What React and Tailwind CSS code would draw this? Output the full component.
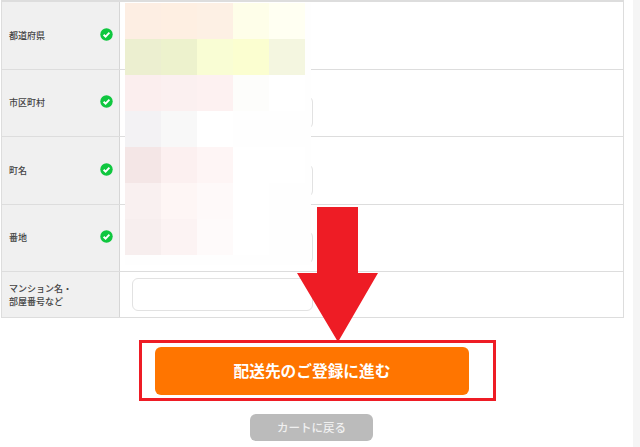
import React from 'react';

const jp = { fontFamily: '"Noto Sans CJK JP", "Liberation Sans", sans-serif' };

const rows = [
  { label: '都道府県', input: false },
  { label: '市区町村', input: true },
  { label: '町名', input: true },
  { label: '番地', input: true },
];

// mosaic blur covering the entered address
const patches = [
  ['bg-[#fdeee3]', 'bg-[#feefe2]', 'bg-[#fdf0e4]', 'bg-[#fefee9]', 'bg-[#fffff2]'],
  ['bg-[#ecefd0]', 'bg-[#edf2cd]', 'bg-[#f9fdd4]', 'bg-[#fbfed0]', 'bg-[#f4f6e0]'],
  ['bg-[#fbeeee]', 'bg-[#fbf0f0]', 'bg-[#fdf1f1]', 'bg-[#fdfdfb]', 'bg-[#ffffff]'],
  ['bg-[#f3f2f4]', 'bg-[#f8f8f8]', 'bg-[#ffffff]', 'bg-[#fefefe]', 'bg-[#fefefe]'],
  ['bg-[#f4e6e6]', 'bg-[#fcf0f0]', 'bg-[#fef5f5]', 'bg-[#ffffff]', 'bg-[#ffffff]'],
  ['bg-[#f9f0f0]', 'bg-[#fef6f5]', 'bg-[#fef9f9]', 'bg-[#ffffff]', 'bg-[#fefefe]'],
  ['bg-[#f7eeee]', 'bg-[#fcf3f3]', 'bg-[#fefafa]', 'bg-[#ffffff]', 'bg-[#fefefe]'],
];

const Check = () => (
  <svg width="13" height="13" viewBox="0 0 13 13" className="shrink-0 -mt-0.5">
    <circle cx="6.5" cy="6.5" r="6.2" fill="#0fc73f" />
    <path d="M3.6 6.7 L5.6 8.6 L9.4 4.7" fill="none" stroke="#fff" strokeWidth="1.9" />
  </svg>
);

const Row = ({ label, input }) => (
  <div className="flex h-[67.5px] border-b border-[#dddddd]">
    <div className="w-[118px] bg-[#f0f0f0] border-r border-[#d6d6d6] pl-[7px] pr-[6px] flex items-center justify-between text-[9px] font-medium text-[#444444]">
      <span>{label}</span>
      <Check />
    </div>
    <div className="flex-1 pl-3 pb-[7px] flex items-end">
      {input && <div className="w-[181px] h-[33px] border border-[#e2e2e2] rounded-md bg-white" />}
    </div>
  </div>
);

export default function App() {
  return (
    <div className="relative w-[640px] h-[447px] overflow-hidden bg-white flex" style={jp}>
      <div className="w-[633px] pl-px pr-[9px]">
        <div className="border-t-2 border-r border-l border-[#dddddd]">
          {rows.map((r) => (
            <Row key={r.label} {...r} />
          ))}
          <div className="flex h-[46px] border-b border-[#dddddd]">
            <div className="w-[118px] bg-[#f0f0f0] border-r border-[#d6d6d6] pl-[7px] flex items-center text-[9px] leading-[13px] font-medium text-[#444444]">
              <span>
                マンション名・
                <br />
                部屋番号など
              </span>
            </div>
            <div className="flex-1 pl-3 flex items-center">
              <div className="w-[181px] h-[33px] border border-[#e2e2e2] rounded-md bg-white" />
            </div>
          </div>
        </div>

        <div className="mt-[22px] ml-[138px] w-[357px] h-[61px] border-[3px] border-[#ee1c25] flex items-start pt-[4px] pl-[13px]">
          <button className="w-[314px] h-[48px] rounded-md bg-[#ff7500] text-white font-bold text-[15.7px]">
            配送先のご登録に進む
          </button>
        </div>

        <div className="mt-[13px] ml-[249px]">
          <button className="block w-[123px] h-[27px] rounded-md bg-[#bbbbbb] text-[#f0f0f0] font-medium text-[11.5px]">
            カートに戻る
          </button>
        </div>
      </div>
      <div className="flex-1 bg-[#f5f5f5]" />

      {/* blurred address overlay */}
      <div className="absolute left-[125px] top-[3px] w-[186px] h-[262px] bg-[#fefefe]">
        <div className="grid grid-cols-[repeat(5,36px)] auto-rows-[36px]">
          {patches.flat().map((c, i) => (
            <div key={i} className={c} />
          ))}
        </div>
      </div>

      {/* red arrow */}
      <svg className="absolute left-[296px] top-[206px]" width="84" height="136" viewBox="0 0 84 136">
        <path d="M21 1 H62 V67 H82 L42 136 L1 67 H21 Z" fill="#ee1c25" />
      </svg>
    </div>
  );
}
